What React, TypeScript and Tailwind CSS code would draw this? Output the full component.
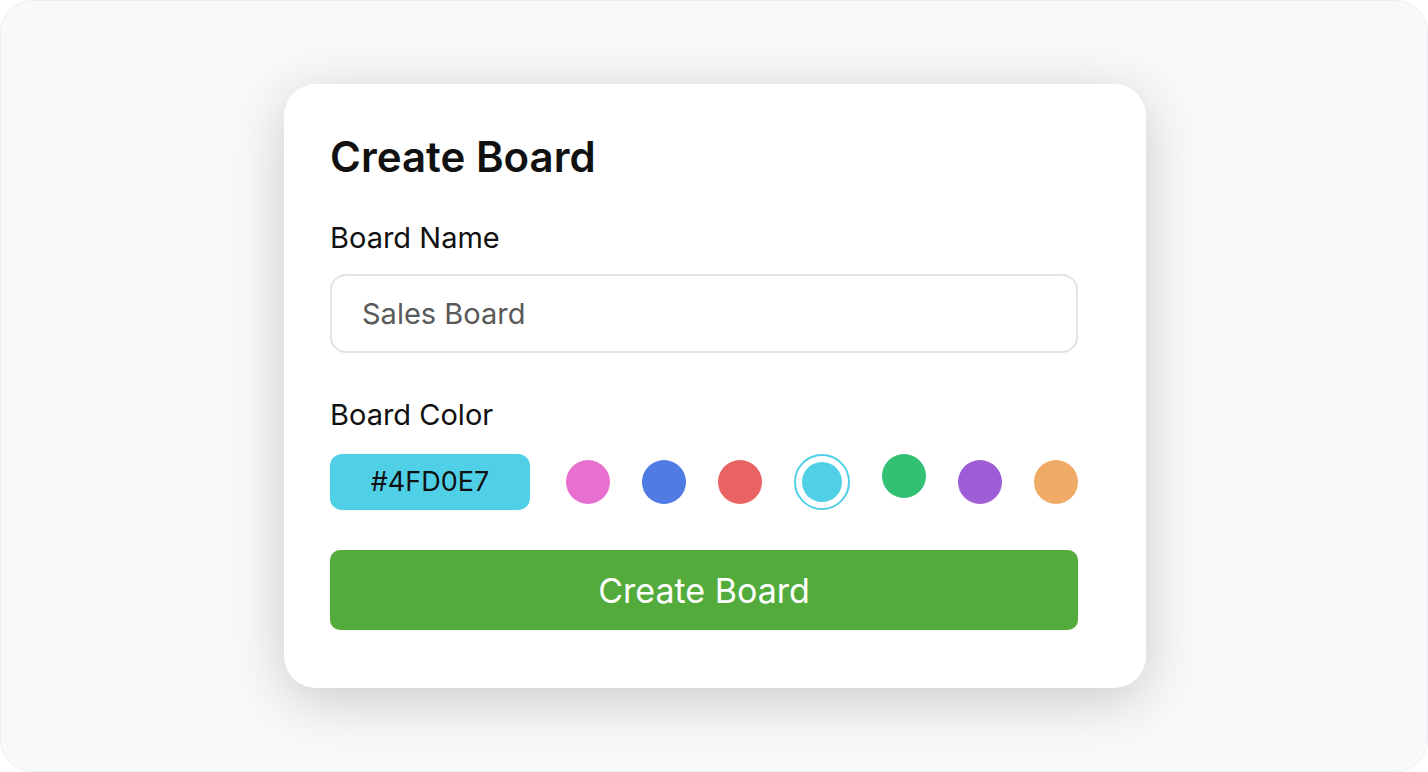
const SWATCHES = [
  { hex: '#E870D1', selected: false },
  { hex: '#4F7BE3', selected: false },
  { hex: '#E86361', selected: false },
  { hex: '#4FD0E7', selected: true },
  { hex: '#32C172', selected: false, raised: true },
  { hex: '#9E5DD7', selected: false },
  { hex: '#EFAA66', selected: false },
]

function Swatch({ hex, selected, raised }: { hex: string; selected: boolean; raised?: boolean }) {
  if (selected) {
    return (
      <span
        className="flex h-[56px] w-[56px] shrink-0 items-center justify-center rounded-full border-2 border-[#4FD0E7]"
        aria-label={hex}
      >
        <span className="h-[40px] w-[40px] rounded-full" style={{ backgroundColor: hex }} />
      </span>
    )
  }
  return (
    <span
      className={`h-[44px] w-[44px] shrink-0 rounded-full ${raised ? 'self-start' : ''}`}
      style={{ backgroundColor: hex }}
      aria-label={hex}
    />
  )
}

export default function App() {
  return (
    <div className="h-[772px] w-full bg-white" style={{ fontFamily: 'Inter, "Noto Sans", sans-serif' }}>
      <div className="flex h-full w-full items-center justify-center rounded-[32px] border border-[#eceef1] bg-[#f8f9fb] pl-[2px]">
        <div className="w-[862px] rounded-[32px] bg-white pb-[58px] pl-[46px] pt-[48px] shadow-[0_12px_56px_rgba(0,0,0,0.19)]">
          <div className="w-[748px]">
            <h1 className="text-[42px] font-semibold leading-[50px] text-[#111]">Create Board</h1>

            <label className="mt-[38px] block text-[29px] leading-[36px] text-[#111]">Board Name</label>
            <div className="mt-[18px] flex h-[79px] items-center rounded-[16px] border-2 border-[#e2e2e2] px-[30px]">
              <span className="text-[29px] text-[#5a5a5a]">Sales Board</span>
            </div>

            <label className="mt-[44px] block text-[29px] leading-[36px] text-[#111]">Board Color</label>
            <div className="mt-[21px] flex h-[56px] items-center">
              <div className="flex h-[56px] w-[200px] shrink-0 items-center justify-center rounded-[12px] bg-[#4FD0E7] text-[27px] text-[#111]">
                #4FD0E7
              </div>
              <div className="ml-[36px] flex h-[56px] items-center gap-[32px]">
                {SWATCHES.map((s) => (
                  <Swatch key={s.hex} {...s} />
                ))}
              </div>
            </div>

            <button
              type="button"
              className="mt-[40px] flex h-[80px] w-full items-center justify-center rounded-[10px] bg-[#52AB3B] text-[34px] font-normal text-white"
            >
              Create Board
            </button>
          </div>
        </div>
      </div>
    </div>
  )
}
